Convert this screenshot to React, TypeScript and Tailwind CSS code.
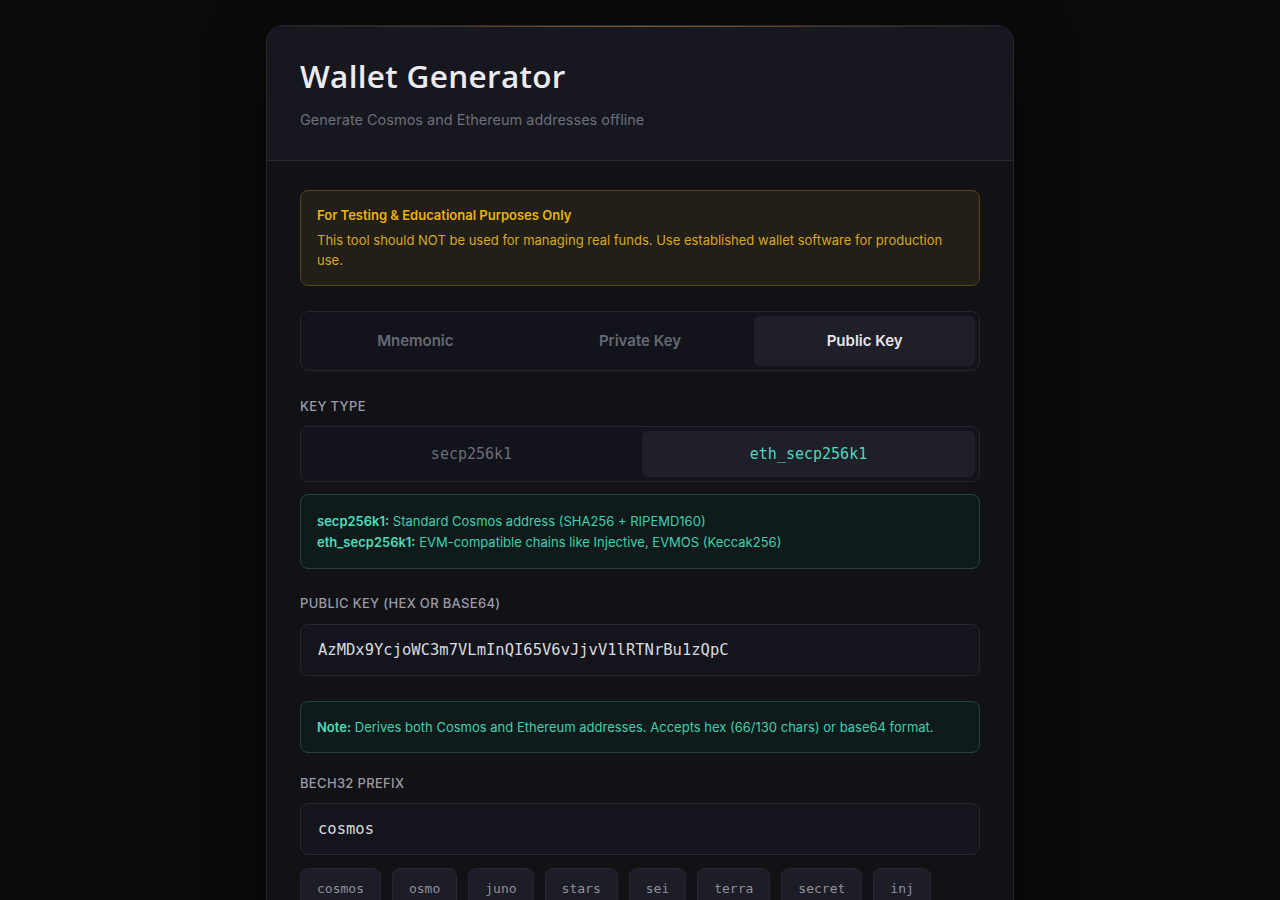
import { useState } from "react";

const sans = "font-['Inter','Noto_Sans',sans-serif]";
const mono = "font-['DejaVu_Sans_Mono','Liberation_Mono',monospace]";

const modes = ["Mnemonic", "Private Key", "Public Key"];
const keyTypes = ["secp256k1", "eth_secp256k1"];
const prefixes = ["cosmos", "osmo", "juno", "stars", "sei", "terra", "secret", "inj"];

function Label({ children }: { children: React.ReactNode }) {
  return (
    <div className="text-[13px] leading-5 font-medium tracking-wide text-[#9a9ca6] uppercase">
      {children}
    </div>
  );
}

export default function App() {
  const [mode, setMode] = useState("Public Key");
  const [keyType, setKeyType] = useState("eth_secp256k1");
  const [pubKey, setPubKey] = useState("AzMDx9YcjoWC3m7VLmInQI65V6vJjvV1lRTNrBu1zQpC");
  const [prefix, setPrefix] = useState("cosmos");

  return (
    <div className={`min-h-screen bg-[#0b0b0d] pt-[25px] ${sans}`}>
      <div className="relative mx-auto w-[748px] rounded-2xl border border-[#272830] bg-[#111116] shadow-[0_20px_60px_rgba(0,0,0,0.6)] overflow-hidden">
        {/* thin amber glow along the top edge */}
        <div className="absolute inset-x-0 top-0 h-px bg-gradient-to-r from-transparent via-[#a86b2a]/80 to-transparent" />

        <header className="bg-[#16171f] border-b border-[#272830] px-[33px] pt-8 pb-[30px]">
          <h1 className="font-['Open_Sans',sans-serif] text-[31.5px] leading-9 font-semibold tracking-[0.01em] text-[#ececf0]">
            Wallet Generator
          </h1>
          <p className="mt-4 text-[14.5px] leading-5 text-[#6c6e79]">
            Generate Cosmos and Ethereum addresses offline
          </p>
        </header>

        <div className="px-[33px] pt-[29px] pb-10">
          {/* warning */}
          <div className="rounded-lg border border-[#54451c] bg-[#221e18] px-4 pt-[14px] pb-[15px]">
            <div className="text-[13px] leading-5 font-semibold text-[#eab308]">
              For Testing &amp; Educational Purposes Only
            </div>
            <p className="mt-[5px] text-[13px] leading-5 text-[#d9a81e]">
              This tool should NOT be used for managing real funds. Use established wallet software for production use.
            </p>
          </div>

          {/* mode tabs */}
          <div className="mt-[25px] grid grid-cols-3 gap-1 rounded-lg border border-[#25262f] bg-[#13141b] p-1">
            {modes.map((m) => (
              <button
                key={m}
                onClick={() => setMode(m)}
                className={`h-[50px] rounded-md text-[15px] font-semibold ${
                  m === mode ? "bg-[#1e1f28] text-[#e6e7eb]" : "text-[#666874]"
                }`}
              >
                {m}
              </button>
            ))}
          </div>

          <div className="mt-[25px]">
            <Label>Key Type</Label>
          </div>
          <div className="mt-2.5 grid grid-cols-2 gap-1 rounded-lg border border-[#25262f] bg-[#13141b] p-1">
            {keyTypes.map((k) => (
              <button
                key={k}
                onClick={() => setKeyType(k)}
                className={`h-[46px] rounded-md text-[15px] ${mono} ${
                  k === keyType ? "bg-[#1e1f28] text-[#4fd8bd]" : "text-[#6c6e79]"
                }`}
              >
                {k}
              </button>
            ))}
          </div>

          <div className="mt-3 rounded-lg border border-[#1e463f] bg-[#0f1b1b] px-4 pt-4 pb-[15px] text-[13px] leading-[21px] text-[#3fcfb0]">
            <div>
              <span className="font-semibold text-[#4fdcbd]">secp256k1:</span> Standard Cosmos address (SHA256 + RIPEMD160)
            </div>
            <div>
              <span className="font-semibold text-[#4fdcbd]">eth_secp256k1:</span> EVM-compatible chains like Injective, EVMOS (Keccak256)
            </div>
          </div>

          <div className="mt-6">
            <Label>Public Key (hex or base64)</Label>
          </div>
          <input
            value={pubKey}
            onChange={(e) => setPubKey(e.target.value)}
            className={`mt-[11px] block h-[52px] w-full rounded-lg border border-[#272830] bg-[#14151c] px-[17px] text-[15.5px] text-[#d9dade] outline-none ${mono}`}
          />

          <div className="mt-[25px] rounded-lg border border-[#1e463f] bg-[#0f1b1b] px-4 py-[15px] text-[13px] leading-5 text-[#3fcfb0]">
            <span className="font-semibold text-[#4fdcbd]">Note:</span> Derives both Cosmos and Ethereum addresses. Accepts hex (66/130 chars) or base64 format.
          </div>

          <div className="mt-5">
            <Label>Bech32 Prefix</Label>
          </div>
          <input
            value={prefix}
            onChange={(e) => setPrefix(e.target.value)}
            className={`mt-2.5 block h-[52px] w-full rounded-lg border border-[#272830] bg-[#14151c] px-[17px] text-[15.5px] text-[#d9dade] outline-none ${mono}`}
          />

          <div className="mt-[13px] flex flex-wrap gap-[11px]">
            {prefixes.map((p) => (
              <button
                key={p}
                onClick={() => setPrefix(p)}
                className={`rounded-lg border border-[#262730] bg-[#1c1d26] px-4 py-2.5 text-[13px] leading-5 text-[#8e909b] ${mono}`}
              >
                {p}
              </button>
            ))}
          </div>
        </div>
      </div>
    </div>
  );
}
